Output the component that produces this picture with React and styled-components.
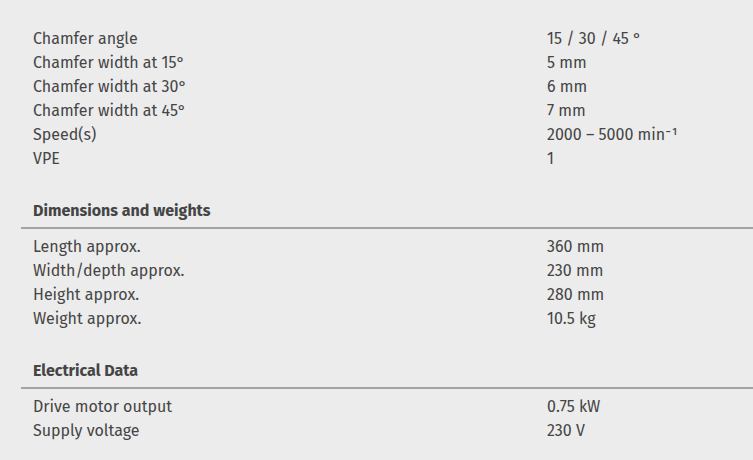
import React from 'react'
import styled, { createGlobalStyle } from 'styled-components';

const GlobalStyle = createGlobalStyle`
body {
  margin: 0;
  background: #ececec;
  font-family: "Fira Sans", Lato, "Open Sans", sans-serif;
  color: #454545;
}
`;

const StyledPAGE = styled.div`
padding-top: 27px;
padding-left: 21px;
overflow: hidden;
`;

const StyledSECTION = styled.section`
margin-bottom: 28px;
`;

const StyledHEAD = styled.h3`
margin: 0;
padding: 0 0 4px 12px;
font-size: 16px;
line-height: 24px;
font-weight: 700;
border-bottom: 2px solid #a3a3a3;
margin-bottom: 6px;
`;

const StyledROW = styled.div`
display: grid;
grid-template-columns: 514px 1fr;
padding-left: 12px;
font-size: 16px;
line-height: 24px;
`;

const specs = [
    {
        title: null,
        rows: [
            ['Chamfer angle', '15 / 30 / 45 °'],
            ['Chamfer width at 15°', '5 mm'],
            ['Chamfer width at 30°', '6 mm'],
            ['Chamfer width at 45°', '7 mm'],
            ['Speed(s)', '2000 – 5000 min⁻¹'],
            ['VPE', '1'],
        ],
    },
    {
        title: 'Dimensions and weights',
        rows: [
            ['Length approx.', '360 mm'],
            ['Width/depth approx.', '230 mm'],
            ['Height approx.', '280 mm'],
            ['Weight approx.', '10.5 kg'],
        ],
    },
    {
        title: 'Electrical Data',
        rows: [
            ['Drive motor output', '0.75 kW'],
            ['Supply voltage', '230 V'],
        ],
    },
]

const App = () => {
    return (
        <StyledPAGE>
            <GlobalStyle />
            {specs.map((sec, i) => (
                <StyledSECTION key={i}>
                    {sec.title && <StyledHEAD>{sec.title}</StyledHEAD>}
                    {sec.rows.map(([label, value]) => (
                        <StyledROW key={label}>
                            <span>{label}</span>
                            <span>{value}</span>
                        </StyledROW>
                    ))}
                </StyledSECTION>
            ))}
        </StyledPAGE>
    )
}

export default App;
